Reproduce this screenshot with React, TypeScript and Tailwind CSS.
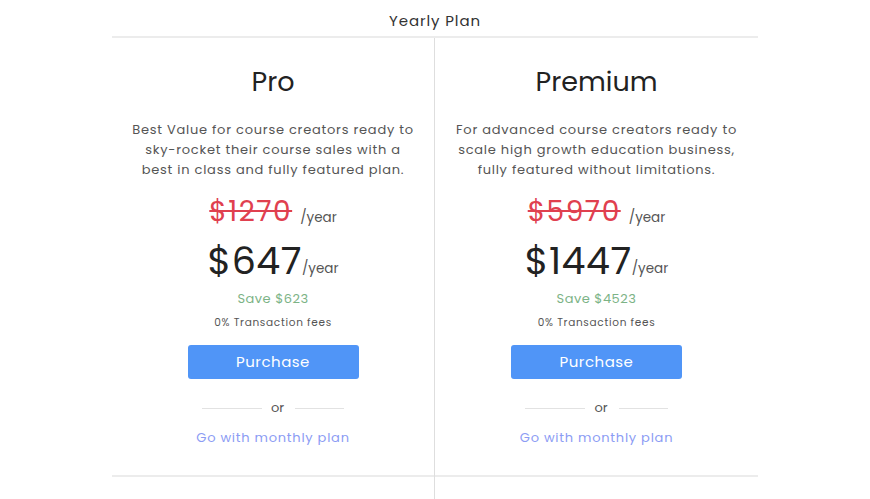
import React from 'react';

interface Plan {
  name: string;
  lines: string[];
  oldPrice: string;
  price: string;
  save: string;
}

const plans: Plan[] = [
  {
    name: 'Pro',
    lines: [
      'Best Value for course creators ready to',
      'sky-rocket their course sales with a',
      'best in class and fully featured plan.',
    ],
    oldPrice: '$1270',
    price: '$647',
    save: 'Save $623',
  },
  {
    name: 'Premium',
    lines: [
      'For advanced course creators ready to',
      'scale high growth education business,',
      'fully featured without limitations.',
    ],
    oldPrice: '$5970',
    price: '$1447',
    save: 'Save $4523',
  },
];

function PlanColumn({ plan, last }: { plan: Plan; last: boolean }) {
  return (
    <div className={`flex flex-col items-center ${last ? '' : 'border-r border-[#dedede]'}`}>
      <h2 className="mt-[24px] text-[27px] leading-[40px] font-normal text-[#222]">{plan.name}</h2>
      <p className="mt-[18px] text-center text-[13px] leading-[20px] text-[#555] tracking-[0.75px]">
        {plan.lines.map((l) => (
          <span key={l} className="block">
            {l}
          </span>
        ))}
      </p>
      <div className="mt-[14px] flex items-end h-[36px]">
        <span className="text-[28px] leading-[36px] text-[#e0404f] tracking-[1.5px] line-through decoration-[2px]">
          {plan.oldPrice}
        </span>
        <span className="ml-[8px] mb-[4px] text-[13.5px] leading-[16px] text-[#555]">/year</span>
      </div>
      <div className="mt-[7px] flex items-end h-[48px]">
        <span className="text-[38px] leading-[48px] text-[#222] tracking-[0.5px]">{plan.price}</span>
        <span className="mb-[8px] text-[13.5px] leading-[16px] text-[#555]">/year</span>
      </div>
      <div className="mt-[4px] text-[13px] leading-[20px] text-[#7cb386] tracking-[0.5px]">{plan.save}</div>
      <div className="mt-[6px] text-[10.5px] leading-[16px] text-[#555] tracking-[0.7px]">
        0% Transaction fees
      </div>
      <button className="mt-[14px] w-[171px] h-[34px] rounded-[3px] bg-[#5095f7] text-white text-[15px] tracking-[0.5px]">
        Purchase
      </button>
      <div className="mt-[19px] flex items-center">
        <div className="w-[60px] h-[1px] bg-[#e2e2e2]" />
        <span className="ml-[9px] mr-[11px] text-[13px] leading-[20px] text-[#555]">or</span>
        <div className="w-[49px] h-[1px] bg-[#e2e2e2]" />
      </div>
      <a className="mt-[10px] text-[13px] leading-[20px] text-[#8c9cf4] tracking-[0.75px]">
        Go with monthly plan
      </a>
      <div className="mt-auto mb-[22px] w-full h-[2px] bg-[#ececec]" />
    </div>
  );
}

export default function App() {
  return (
    <div className="w-[870px] h-[499px] bg-white overflow-hidden font-['Poppins','Inter','Open_Sans',sans-serif]">
      <div className="mx-auto w-[646px]">
        <div className="h-[36px] flex items-center justify-center pt-[6px] text-[15px] text-[#333] tracking-[0.9px]">
          Yearly Plan
        </div>
        <div className="h-[2px] bg-[#ececec]" />
        <div className="grid grid-cols-2 h-[461px]">
          {plans.map((p, i) => (
            <PlanColumn key={p.name} plan={p} last={i === plans.length - 1} />
          ))}
        </div>
      </div>
    </div>
  );
}
